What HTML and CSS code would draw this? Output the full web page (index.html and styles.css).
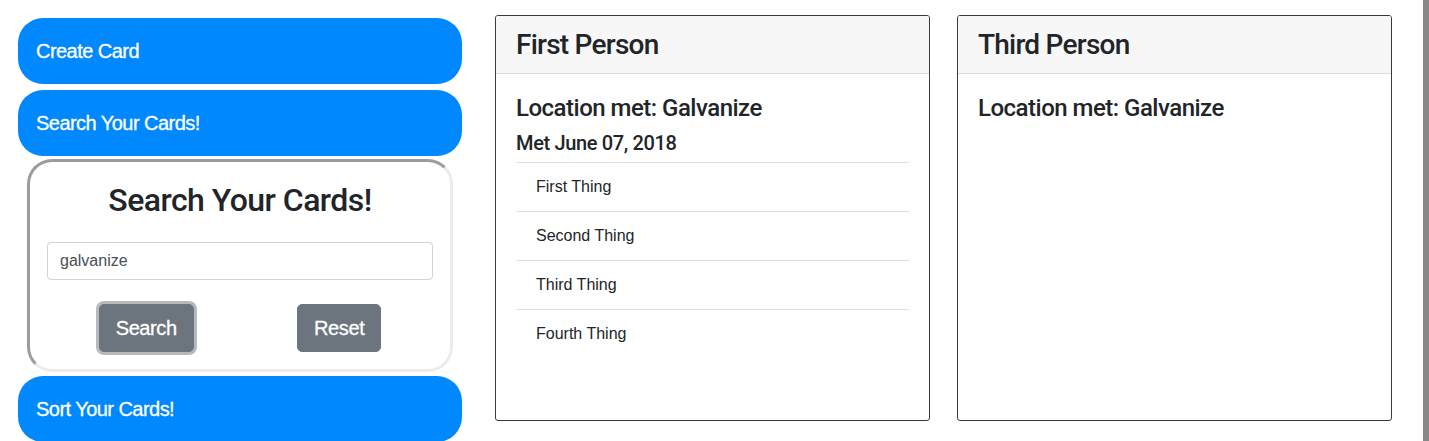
FILE: index.html
```html
<!DOCTYPE html>
<html lang="en">
<head>
<meta charset="utf-8">
<title>Cards</title>
<link rel="stylesheet" href="styles.css">
</head>
<body>
<div class="page">
  <aside class="sidebar">
    <div class="pill">Create Card</div>
    <div class="pill">Search Your Cards!</div>
    <div class="search-box">
      <h2 class="search-title">Search Your Cards!</h2>
      <input class="search-input" type="text" value="galvanize">
      <div class="search-actions">
        <button class="btn btn-focus">Search</button>
        <button class="btn">Reset</button>
      </div>
    </div>
    <div class="pill">Sort Your Cards!</div>
  </aside>
  <main class="cards">
    <section class="card">
      <header class="card-header"><h3>First Person</h3></header>
      <div class="card-body">
        <h4 class="loc">Location met: Galvanize</h4>
        <h5 class="met">Met June 07, 2018</h5>
        <ul class="list">
          <li>First Thing</li>
          <li>Second Thing</li>
          <li>Third Thing</li>
          <li>Fourth Thing</li>
        </ul>
      </div>
    </section>
    <section class="card">
      <header class="card-header"><h3>Third Person</h3></header>
      <div class="card-body">
        <h4 class="loc">Location met: Galvanize</h4>
      </div>
    </section>
  </main>
  <div class="edge"></div>
</div>
</body>
</html>
```
FILE: styles.css
```css
* { box-sizing: border-box; }
html, body { margin: 0; padding: 0; }
body {
  font-family: "Liberation Sans", Arial, sans-serif;
  color: #212529;
  background: #fff;
  height: 441px;
  overflow: hidden;
}
.page {
  display: flex;
  align-items: flex-start;
  height: 441px;
}
.sidebar {
  width: 444px;
  margin-left: 18px;
  padding-top: 18px;
  display: flex;
  flex-direction: column;
  flex-shrink: 0;
}
.pill {
  height: 66px;
  border-radius: 25px;
  background: #0088ff;
  color: #fff;
  font-size: 20px;
  letter-spacing: -0.027em;
  -webkit-text-stroke: 0.3px #fff;
  padding-left: 18px;
  display: flex;
  align-items: center;
  flex-shrink: 0;
}
.pill + .pill { margin-top: 6px; }
.search-box {
  margin: 3px 9px 4px;
  border: 3px solid;
  border-color: #9c9c9c #ececec #ececec #9c9c9c;
  border-radius: 25px;
  padding: 17px 17px 17px;
  display: flex;
  flex-direction: column;
}
.search-title {
  margin: 2px 0 23px;
  font-family: Roboto, "Liberation Sans", Arial, sans-serif;
  font-size: 32px;
  font-weight: 500;
  line-height: 38px;
  letter-spacing: -0.017em;
  text-align: center;
}
.search-input {
  height: 38px;
  border: 1px solid #ced4da;
  border-radius: 4px;
  padding: 6px 12px;
  font-family: "Liberation Sans", Arial, sans-serif;
  font-size: 16px;
  color: #495057;
  margin: 0 0 24px;
  width: 100%;
}
.search-actions {
  display: flex;
  justify-content: space-around;
}
.btn {
  height: 48px;
  padding: 0 16px;
  border: 1px solid #6c757d;
  border-radius: 5px;
  background: #6c757d;
  color: #fff;
  font-family: "Liberation Sans", Arial, sans-serif;
  font-size: 20px;
  letter-spacing: -0.02em;
  -webkit-text-stroke: 0.3px #fff;
}
.btn-focus {
  box-shadow: 0 0 0 3px #b6babe;
}
.cards {
  display: flex;
  gap: 27px;
  margin-left: 33px;
  margin-top: 15px;
}
.card {
  width: 435px;
  height: 406px;
  border: 1px solid #343a40;
  border-radius: 3px;
  overflow: hidden;
}
.card-header {
  background: #f7f7f7;
  border-bottom: 1px solid #dcdcdc;
  padding: 12px 20px;
}
.card-header h3 {
  margin: 0;
  font-family: Roboto, "Liberation Sans", Arial, sans-serif;
  font-size: 28px;
  font-weight: 500;
  line-height: 33px;
  letter-spacing: -0.027em;
}
.card-body { padding: 20px; }
.loc {
  margin: 0 0 8px;
  font-family: Roboto, "Liberation Sans", Arial, sans-serif;
  font-size: 24px;
  font-weight: 500;
  line-height: 29px;
  letter-spacing: -0.021em;
}
.met {
  margin: 0 0 7px;
  font-family: Roboto, "Liberation Sans", Arial, sans-serif;
  font-size: 20px;
  font-weight: 500;
  line-height: 24px;
  letter-spacing: -0.018em;
}
.list {
  list-style: none;
  margin: 0;
  padding: 0;
}
.list li {
  border-top: 1px solid #dfdfdf;
  padding: 12px 20px;
  font-size: 16px;
  line-height: 24px;
}
.edge {
  width: 6px;
  height: 441px;
  background: #888;
  margin-left: auto;
  flex-shrink: 0;
}
```
